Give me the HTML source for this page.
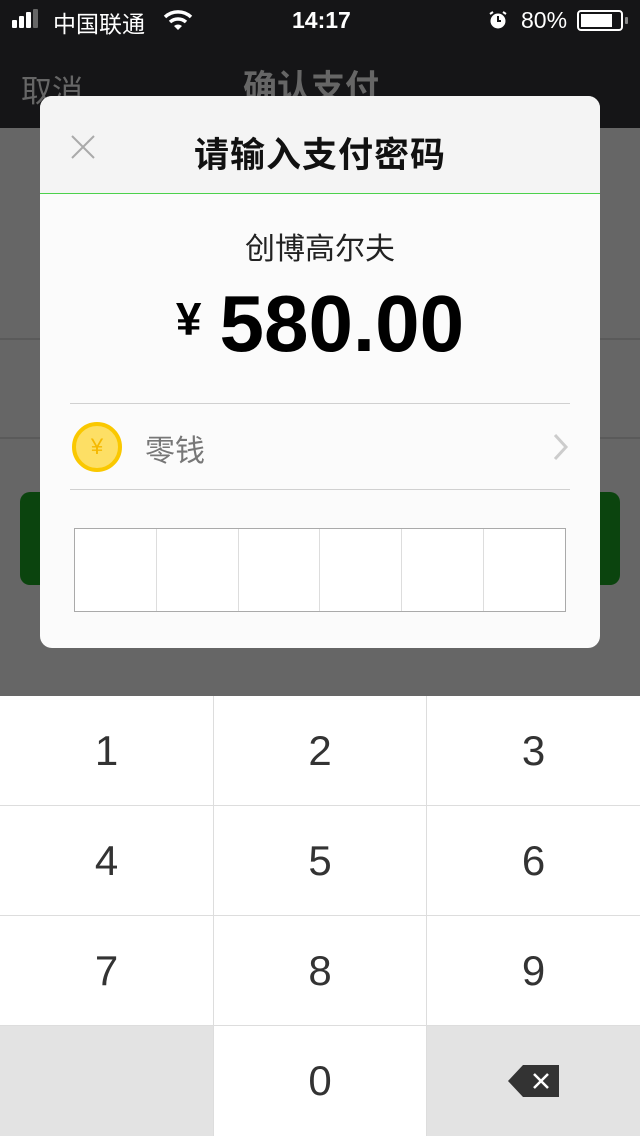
<!DOCTYPE html>
<html><head><meta charset="utf-8"><style>
*{margin:0;padding:0;box-sizing:border-box}
body{width:640px;height:1136px;position:relative;overflow:hidden;background:#666;font-family:"Liberation Sans","Noto Sans CJK SC",sans-serif}
.abs{position:absolute}
.key{position:absolute;width:213px;height:110px;background:#fff;display:flex;align-items:center;justify-content:center;font-size:42px;color:#333;font-family:"Liberation Sans",sans-serif}
</style></head><body>
<div class="abs" style="left:0;top:0;width:640px;height:128px;background:#151517"></div>
<div class="abs" style="left:12px;top:20px;width:5px;height:8px;background:#fff;border-radius:1px"></div>
<div class="abs" style="left:19px;top:16px;width:5px;height:12px;background:#fff;border-radius:1px"></div>
<div class="abs" style="left:26px;top:12px;width:5px;height:16px;background:#fff;border-radius:1px"></div>
<div class="abs" style="left:33px;top:9px;width:5px;height:19px;background:#666;border-radius:1px"></div>
<div class="abs" style="left:53px;top:5px;font-size:23px;color:#fff">中国联通</div>
<svg class="abs" style="left:163px;top:9px" width="30" height="22" viewBox="0 0 30 22"><path d="M2 8 A19 19 0 0 1 28 8" stroke="#fff" stroke-width="3.5" fill="none"/><path d="M7 13 A12 12 0 0 1 23 13" stroke="#fff" stroke-width="3.5" fill="none"/><path d="M11 17 L15 21 L19 17 A6 6 0 0 0 11 17Z" fill="#fff"/></svg>
<div class="abs" style="left:292px;top:7px;font-size:23px;color:#fff;font-weight:bold">14:17</div>
<svg class="abs" style="left:488px;top:10px" width="20" height="20" viewBox="0 0 20 20"><circle cx="10" cy="11" r="7.5" fill="#fff"/><path d="M10 6v5h3" stroke="#151517" stroke-width="2" fill="none"/><path d="M2 4l3-2M18 4l-3-2" stroke="#fff" stroke-width="2"/></svg>
<div class="abs" style="left:521px;top:7px;font-size:23px;color:#fff">80%</div>
<div class="abs" style="left:577px;top:10px;width:46px;height:21px;border:2px solid #fff;border-radius:4px"></div>
<div class="abs" style="left:581px;top:14px;width:31px;height:13px;background:#fff"></div>
<div class="abs" style="left:625px;top:17px;width:3px;height:7px;background:#888;border-radius:1px"></div>
<div class="abs" style="left:21px;top:66px;font-size:31px;color:#666">取消</div>
<div class="abs" style="left:243px;top:60px;font-size:34px;color:#666;font-weight:bold">确认支付</div>
<div class="abs" style="left:0;top:338px;width:640px;height:2px;background:#5a5a5a"></div>
<div class="abs" style="left:0;top:437px;width:640px;height:2px;background:#5a5a5a"></div>
<div class="abs" style="left:20px;top:492px;width:600px;height:93px;background:#0b440e;border-radius:10px"></div>
<div class="abs" style="left:40px;top:96px;width:560px;height:552px;background:#fbfbfb;border-radius:12px;overflow:hidden">
<div class="abs" style="left:0;top:0;width:560px;height:98px;background:#f4f4f4"></div>
<svg class="abs" style="left:30px;top:38px" width="26" height="26"><path d="M2 2L24 24M24 2L2 24" stroke="#aaa" stroke-width="2"/></svg>
<div class="abs" style="left:0;top:31px;width:560px;text-align:center;font-size:35px;color:#111;font-weight:bold;letter-spacing:1px">请输入支付密码</div>
<div class="abs" style="left:0;top:97px;width:560px;height:1px;background:#4cd14c"></div>
<div class="abs" style="left:0;top:128px;width:560px;text-align:center;font-size:30px;color:#222">创博高尔夫</div>
<div class="abs" style="left:0;top:182px;width:560px;text-align:center;color:#000;font-weight:bold"><span style="font-size:46px;vertical-align:16px">¥</span><span style="font-size:80px;margin-left:18px">580.00</span></div>
<div class="abs" style="left:30px;top:307px;width:500px;height:1px;background:#d0d0d0"></div>
<div class="abs" style="left:32px;top:326px;width:50px;height:50px;border-radius:50%;background:#fddf65;border:4px solid #fac800;color:#f5b800;font-size:22px;text-align:center;line-height:42px">¥</div>
<div class="abs" style="left:105px;top:330px;font-size:30px;color:#777">零钱</div>
<svg class="abs" style="left:512px;top:336px" width="18" height="30"><path d="M3 3L14 15L3 27" stroke="#ccc" stroke-width="3" fill="none"/></svg>
<div class="abs" style="left:30px;top:393px;width:500px;height:1px;background:#d0d0d0"></div>
<div class="abs" style="left:34px;top:432px;width:492px;height:84px;border:1px solid #aaa;background:#fff;display:flex">
<div style="flex:1;border-right:1px solid #ddd"></div><div style="flex:1;border-right:1px solid #ddd"></div><div style="flex:1;border-right:1px solid #ddd"></div><div style="flex:1;border-right:1px solid #ddd"></div><div style="flex:1;border-right:1px solid #ddd"></div><div style="flex:1"></div>
</div>
</div>
<div class="abs" style="left:0;top:696px;width:640px;height:440px;background:#ddd"></div>
<div class="key" style="left:0;top:696px;height:109px">1</div>
<div class="key" style="left:214px;top:696px;width:212px;height:109px">2</div>
<div class="key" style="left:427px;top:696px;height:109px">3</div>
<div class="key" style="left:0;top:806px;height:109px">4</div>
<div class="key" style="left:214px;top:806px;width:212px;height:109px">5</div>
<div class="key" style="left:427px;top:806px;height:109px">6</div>
<div class="key" style="left:0;top:916px;height:109px">7</div>
<div class="key" style="left:214px;top:916px;width:212px;height:109px">8</div>
<div class="key" style="left:427px;top:916px;height:109px">9</div>
<div class="key" style="left:0;top:1026px;height:110px;background:#e3e3e3"></div>
<div class="key" style="left:214px;top:1026px;width:212px;height:110px">0</div>
<div class="key" style="left:427px;top:1026px;height:110px;background:#e3e3e3">
<svg width="54" height="34" viewBox="0 0 54 34"><path d="M16 1H52V33H16L1 17Z" fill="#333"/><path d="M27 10L41 24M41 10L27 24" stroke="#fff" stroke-width="2.5"/></svg></div>
</body></html>
